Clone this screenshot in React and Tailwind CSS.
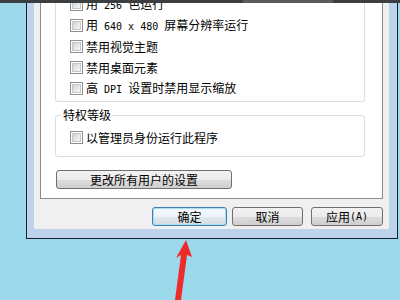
import React from "react";

const Mono = ({ children }) => (
  <span className="font-['DejaVu_Sans_Mono',monospace] text-[10px] whitespace-pre">{children}</span>
);

const CheckBox = () => (
  <span className="w-[13px] h-[13px] shrink-0 border border-[#8e8f8f] bg-white p-[1px] flex">
    <span className="flex-1 border border-[#c3c7cc] bg-[linear-gradient(135deg,#cdd1d6_0%,#e6e8ea_55%,#f7f7f7_100%)]" />
  </span>
);

const Row = ({ children }) => (
  <div className="h-[21px] flex items-center pl-[14px] gap-[3px] leading-none">
    <CheckBox />
    <span className="whitespace-pre">{children}</span>
  </div>
);

const WinButton = ({ children, width, primary }) => (
  <button
    type="button"
    className={`h-[19px] shrink-0 rounded-[3px] border flex items-center justify-center leading-none ${width} ${
      primary
        ? "border-[#3c7fb1] shadow-[inset_0_0_0_1px_#a9def7] bg-[linear-gradient(#f4f9fc_0%,#ecf4f8_50%,#dfe9ee_51%,#d3dde3_100%)]"
        : "border-[#707070] bg-[linear-gradient(#f2f2f2_0%,#ebebeb_50%,#dddddd_51%,#cfcfcf_100%)]"
    }`}
  >
    {children}
  </button>
);

export default function App() {
  return (
    <div className="relative w-[400px] h-[300px] overflow-hidden bg-[#9cd9ea] font-['Noto_Sans_CJK_SC',sans-serif] text-[12px] text-black">
      <div className="ml-[26px] w-[372px] border-x border-b border-[#15202a] bg-[#bcd3eb] pl-[7px] pr-[8px] pb-[9px]">
        <div className="bg-[#f0f0f0] px-[6px]">
          {/* tab panel */}
          <div className="h-[205px] border-x border-b border-[#898c95] bg-white pl-[14px]">
            <div className="-mt-[6px] w-[310px] border-x border-b border-[#d5dfe5] rounded-b-[3px] pb-[2px]">
              <Row>
                用<Mono> 256 </Mono>色运行
              </Row>
              <Row>
                用<Mono> 640 x 480 </Mono>屏幕分辨率运行
              </Row>
              <Row>禁用视觉主题</Row>
              <Row>禁用桌面元素</Row>
              <Row>
                高<Mono> DPI </Mono>设置时禁用显示缩放
              </Row>
            </div>

            <div className="relative mt-[13px] w-[310px] border border-[#d5dfe5] rounded-[3px] pt-[11px] pb-[8px]">
              <span className="absolute -top-[9px] left-[6px] bg-white px-[1px] leading-[16px]">特权等级</span>
              <Row>以管理员身份运行此程序</Row>
            </div>

            <WinButton width="w-[176px] mt-[13px] ml-[1px]">更改所有用户的设置</WinButton>
          </div>

          {/* dialog buttons */}
          <div className="h-[30px] flex items-start pt-[8px]">
            <div className="flex ml-[112px]">
              <WinButton width="w-[75px]" primary>
                确定
              </WinButton>
              <WinButton width="w-[71px] ml-[5px]">取消</WinButton>
              <WinButton width="w-[72px] ml-[8px]">
                应用<Mono>(A)</Mono>
              </WinButton>
            </div>
          </div>
        </div>
      </div>

      {/* strip of something cut off at the top edge */}
      <div className="absolute top-0 left-0 w-full h-[3px] bg-[#3b3f42]">
        <div className="ml-[243px] w-[90px] h-full bg-[#575b5e]" />
      </div>

      {/* red arrow pointing at the OK button */}
      <svg className="absolute left-0 top-0" width="400" height="300" viewBox="0 0 400 300">
        <polygon
          points="186,240 192,257 187,255 181,300 175,300 181,255 176,258"
          fill="#ee2a2a"
        />
      </svg>
    </div>
  );
}
